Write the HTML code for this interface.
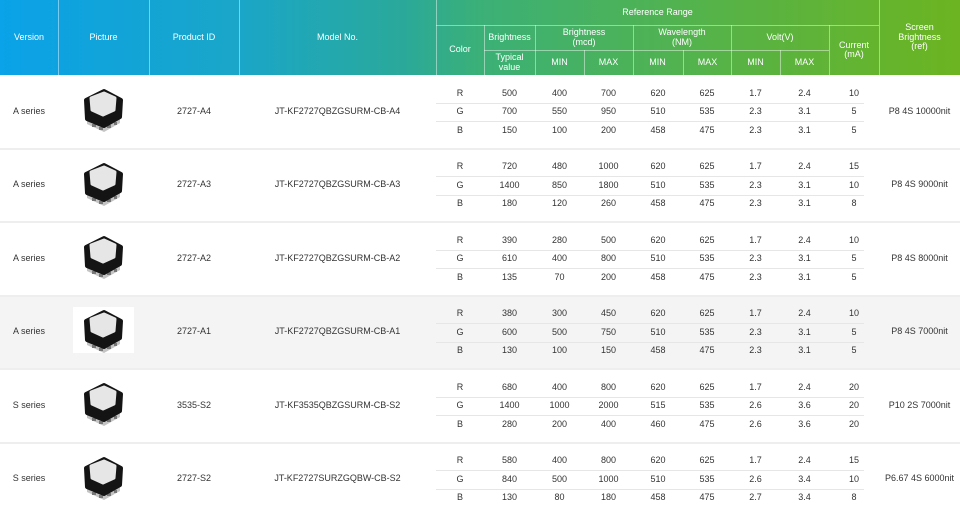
<!DOCTYPE html>
<html><head><meta charset="utf-8"><style>
*{margin:0;padding:0;box-sizing:border-box}
body{width:960px;height:515px;overflow:hidden;background:#fff;font-family:"Liberation Sans",sans-serif;font-size:9px;color:#333;position:relative}
.hd{position:absolute;left:0;top:0;width:960px;height:75px;background:linear-gradient(90deg,#0aa2e8 0%,#1aa6c8 25%,#2aa99a 42%,#3bb077 50%,#56b347 75%,#6cb421 100%)}
.c{position:absolute;display:flex;align-items:center;justify-content:center;text-align:center;line-height:1.05}
.h{color:#fff;font-size:9px}
.vl{position:absolute;width:1px;background:rgba(255,255,255,.45)}
.hl{position:absolute;height:1px;background:rgba(255,255,255,.45)}
.sep{position:absolute;left:0;width:960px;height:2px;background:#eee}
.sub{position:absolute;left:436px;width:428px;height:1px;background:#e6e6e6}
</style></head><body>
<div class="hd"></div>
<div id="g"></div>
<script>
var H='';
function c(x,y,w,h,t,cls){H+='<div class="c '+(cls||'')+'" style="left:'+x+'px;top:'+y+'px;width:'+w+'px;height:'+h+'px">'+t+'</div>';}
function v(x,y,h){H+='<div class="vl" style="left:'+x+'px;top:'+y+'px;height:'+h+'px"></div>';}
function l(x,y,w){H+='<div class="hl" style="left:'+x+'px;top:'+y+'px;width:'+w+'px"></div>';}
c(0,0,58,75,'Version','h');c(58,0,91,75,'Picture','h');c(149,0,90,75,'Product ID','h');c(239,0,197,75,'Model No.','h');
c(436,25,48,50,'Color','h');c(436,0,443,25,'Reference Range','h');
c(484,25,51,25,'Brightness','h');c(484,50,51,25,'Typical<br>value','h');
c(535,25,98,25,'Brightness<br>(mcd)','h');c(633,25,98,25,'Wavelength<br>(NM)','h');c(731,25,98,25,'Volt(V)','h');
var xs=[535,584,633,683,731,780];var lb=['MIN','MAX','MIN','MAX','MIN','MAX'];
for(var i=0;i<6;i++)c(xs[i],50,49,25,lb[i],'h');
c(829,25,50,50,'Current<br>(mA)','h');c(879,0,81,75,'Screen<br>Brightness<br>(ref)','h');
[58,149,239,436,879].forEach(function(x){v(x,0,75)});
v(484,25,50);[535,633,731,829].forEach(function(x){v(x,25,50)});[584,683,780].forEach(function(x){v(x,50,25)});
l(436,25,443);l(484,50,345);
var R=[
['A series','2727-A4','JT-KF2727QBZGSURM-CB-A4','P8 4S 10000nit',[['R',500,400,700,620,625,1.7,2.4,10],['G',700,550,950,510,535,2.3,3.1,5],['B',150,100,200,458,475,2.3,3.1,5]]],
['A series','2727-A3','JT-KF2727QBZGSURM-CB-A3','P8 4S 9000nit',[['R',720,480,1000,620,625,1.7,2.4,15],['G',1400,850,1800,510,535,2.3,3.1,10],['B',180,120,260,458,475,2.3,3.1,8]]],
['A series','2727-A2','JT-KF2727QBZGSURM-CB-A2','P8 4S 8000nit',[['R',390,280,500,620,625,1.7,2.4,10],['G',610,400,800,510,535,2.3,3.1,5],['B',135,70,200,458,475,2.3,3.1,5]]],
['A series','2727-A1','JT-KF2727QBZGSURM-CB-A1','P8 4S 7000nit',[['R',380,300,450,620,625,1.7,2.4,10],['G',600,500,750,510,535,2.3,3.1,5],['B',130,100,150,458,475,2.3,3.1,5]]],
['S series','3535-S2','JT-KF3535QBZGSURM-CB-S2','P10 2S 7000nit',[['R',680,400,800,620,625,1.7,2.4,20],['G',1400,1000,2000,515,535,2.6,3.6,20],['B',280,200,400,460,475,2.6,3.6,20]]],
['S series','2727-S2','JT-KF2727SURZGQBW-CB-S2','P6.67 4S 6000nit',[['R',580,400,800,620,625,1.7,2.4,15],['G',840,500,1000,510,535,2.6,3.4,10],['B',130,80,180,458,475,2.7,3.4,8]]]
];
var cx=[436,484,535,584,633,683,731,780,829];var cw=[48,51,49,49,50,48,49,49,50];
var chip='<svg width="46" height="48" viewBox="0 0 46 48">'+
'<path d="M7 30 L7 38 L24 46 L40 37 L40 28 Z" fill="#c4c4c4"/>'+
'<path d="M12 38 h4 v3 h-4z M19 41 h4 v3 h-4z M27 39 h4 v3 h-4z M34 36 h3 v3 h-3z" fill="#777"/>'+
'<path d="M6 14 L24 5 L41 14 L40 31 L24 40 L7 33 Z" fill="#141414" stroke="#141414" stroke-width="4" stroke-linejoin="round"/>'+
'<path d="M11 12 L24 7 L35 12 L34 24 L23 29 L12 24 Z" fill="#e6e6e6" stroke="#e6e6e6" stroke-width="3" stroke-linejoin="round"/>'+
'</svg>';
for(var r=0;r<6;r++){
 var t=75+r*73.5,d=R[r];
 if(r==3){H+='<div style="position:absolute;left:0;top:'+(t+1)+'px;width:960px;height:72px;background:#f4f4f4"></div><div style="position:absolute;left:73px;top:307px;width:61px;height:46px;background:#fff"></div>';}
 c(0,t,58,73,d[0]);c(149,t,90,73,d[1]);c(239,t,197,73,d[2]);c(879,t,81,73,d[3]);
 H+='<div style="position:absolute;left:80px;top:'+(t+11)+'px">'+chip+'</div>';
 for(var s=0;s<3;s++){var y=t+9+s*18.5;
  for(var k=0;k<9;k++)c(cx[k],y,cw[k],18.5,d[4][s][k]);
  if(s<2)H+='<div class="sub" style="top:'+(y+18.5)+'px"></div>';}
 if(r<5)H+='<div class="sep" style="top:'+(t+72.5)+'px"></div>';
}
document.getElementById('g').innerHTML=H;
</script>
</body></html>
